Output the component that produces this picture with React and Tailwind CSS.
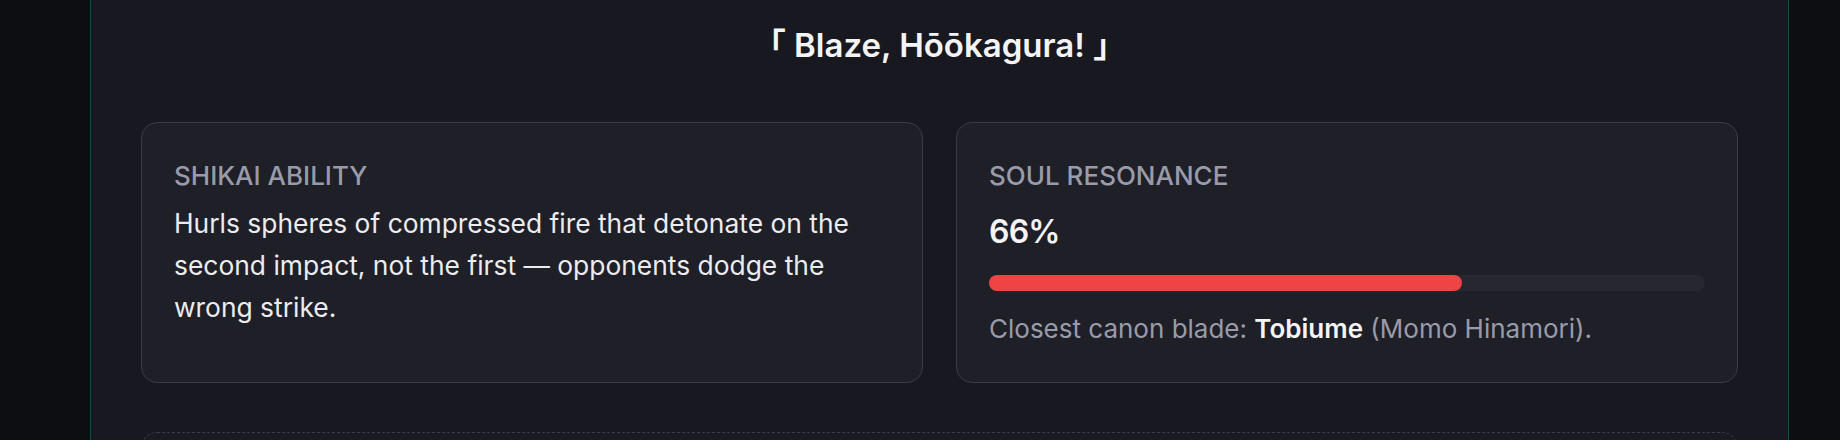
export default function App() {
  const resonance = 66;

  return (
    <div className="flex min-h-[440px] bg-[#0d0e11] pl-[90px] pr-[51px] font-['Inter','Noto_Sans_CJK_JP',sans-serif]">
      <div className="flex-1 border-x border-[#17493a] bg-[#181920] px-[50px] pt-[25px]">
        <h2 className="text-center text-[33px] leading-[40px] font-semibold text-[#f4f4f6]">
          「 Blaze, Hōōkagura! 」
        </h2>

        <div className="mt-[57px] grid grid-cols-2 gap-[33px]">
          <div className="rounded-[16px] border border-[#3a3b45] bg-[#1e1f27] px-8 pt-[37px] pb-[32px]">
            <p className="text-[26px] leading-[32px] font-medium uppercase text-[#9a9ba9]">Shikai Ability</p>
            <p className="mt-[10px] text-[26.4px] leading-[42px] text-[#ececf0]">
              Hurls spheres of compressed fire that detonate on the second impact, not the first — opponents dodge
              the wrong strike.
            </p>
          </div>

          <div className="rounded-[16px] border border-[#3a3b45] bg-[#1e1f27] px-8 pt-[37px] pb-[32px]">
            <p className="text-[26px] leading-[32px] font-medium uppercase text-[#9a9ba9]">Soul Resonance</p>
            <p className="mt-[20px] text-[32px] leading-[40px] font-semibold tracking-tight text-[#f4f4f6]">
              {resonance}%
            </p>
            <div className="mt-[23px] h-4 w-full rounded-full bg-[#262730]">
              <div className="h-4 rounded-full bg-[#ef4444]" style={{ width: `${resonance}%` }} />
            </div>
            <p className="mt-[17px] text-[26px] leading-[42px] text-[#9a9ba9]">
              Closest canon blade: <span className="font-semibold text-[#f4f4f6]">Tobiume</span> (Momo Hinamori).
            </p>
          </div>
        </div>

        <div className="mt-[49px] h-[80px] rounded-[16px] border border-dashed border-[#3a3b45] bg-[#1a1b22]" />
      </div>
    </div>
  );
}
